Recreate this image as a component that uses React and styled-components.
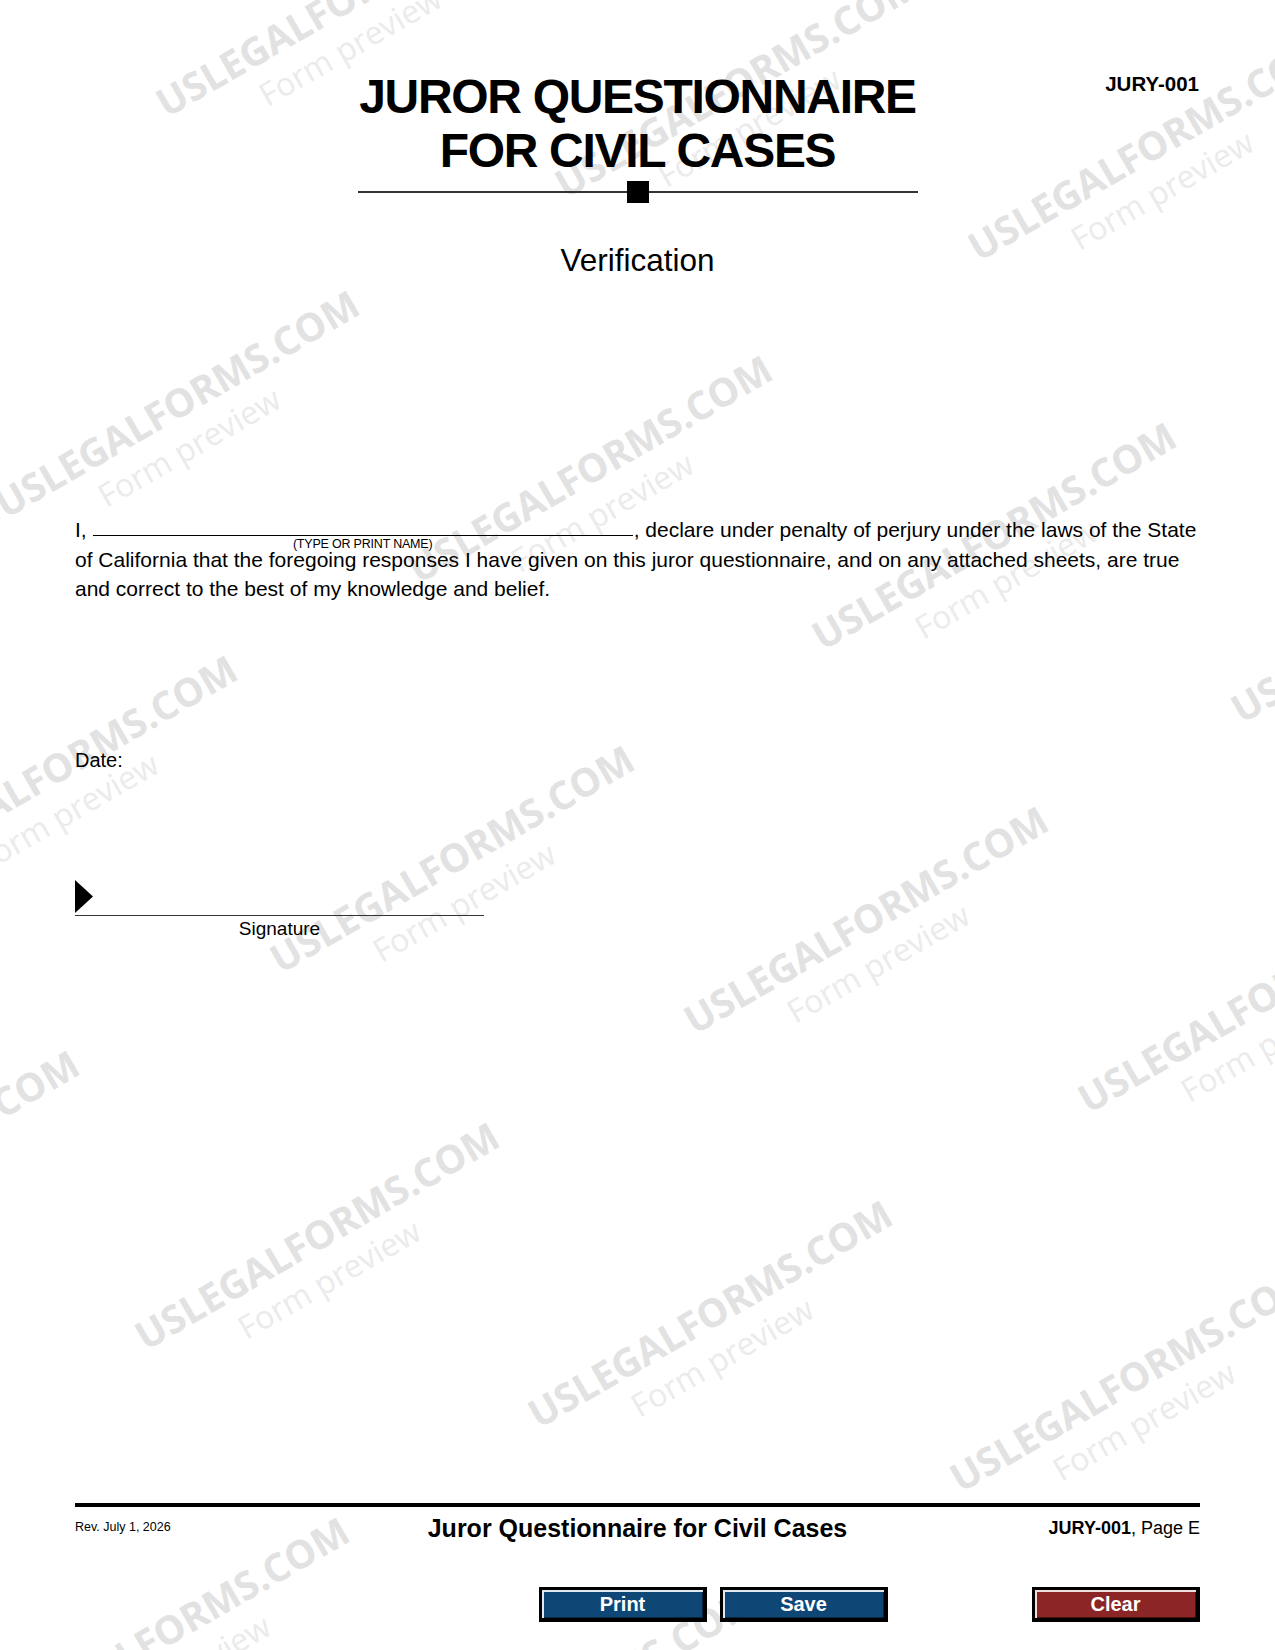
import React from 'react'
import styled, { createGlobalStyle } from 'styled-components'

const GlobalStyle = createGlobalStyle`
  html, body {
    margin: 0;
    padding: 0;
    background: #ffffff;
  }
  body {
    font-family: 'Liberation Sans', Arial, sans-serif;
    color: #000;
  }
`

// baseline start of each "USLEGALFORMS.COM" stamp
const marks = [
  [166, 118], [565, 199], [978, 262],
  [5, 519], [418, 584], [822, 651], [1241, 724],
  [-117, 884], [280, 974], [694, 1035], [1088, 1114],
  [-275, 1279], [145, 1351], [538, 1429], [960, 1493],
  [-5, 1746], [403, 1815],
]

export default function App() {
  return (
    <Page>
      <GlobalStyle />
      <Watermarks>
        {marks.map(([x, y], i) => (
          <Mark key={i} style={{ left: x - 17.3, top: y - 30 }}>
            <Brand>USLEGALFORMS.COM</Brand>
            <Sub>Form preview</Sub>
          </Mark>
        ))}
      </Watermarks>

      <Sheet>
        <Header>
          <span />
          <TitleBox>
            <Title>
              JUROR QUESTIONNAIRE
              <br />
              FOR CIVIL CASES
            </Title>
            <Rule>
              <RuleLine />
              <RuleSquare />
              <RuleLine />
            </Rule>
          </TitleBox>
          <FormCode>JURY-001</FormCode>
        </Header>

        <Heading>Verification</Heading>

        <Declaration>
          I,<NameField><FieldCaption>(TYPE OR PRINT NAME)</FieldCaption></NameField>, declare under
          penalty of perjury under the laws of the State
          <br />
          of California that the foregoing responses I have given on this juror questionnaire, and on any
          attached sheets, are true
          <br />
          and correct to the best of my knowledge and belief.
        </Declaration>

        <DateLabel>Date:</DateLabel>

        <SigBlock>
          <SigArrow viewBox="0 0 18 33" aria-hidden="true">
            <polygon points="0,0 18,16.5 0,33" fill="#000" />
          </SigArrow>
          <SigLine />
          <SigCaption>Signature</SigCaption>
        </SigBlock>

        <Footer>
          <FooterRule />
          <FooterRow>
            <RevDate>Rev. July 1, 2026</RevDate>
            <FooterTitle>Juror Questionnaire for Civil Cases</FooterTitle>
            <PageRef><b>JURY-001</b>, Page E</PageRef>
          </FooterRow>
          <Buttons>
            <FormButton>Print</FormButton>
            <FormButton>Save</FormButton>
            <FormButton $danger>Clear</FormButton>
          </Buttons>
        </Footer>
      </Sheet>
    </Page>
  )
}

const Page = styled.div`
  position: relative;
  width: 1275px;
  height: 1650px;
  overflow: hidden;
  background: #ffffff;
`

const Watermarks = styled.div`
  position: absolute;
  inset: 0;
  z-index: 0;
  pointer-events: none;
`

const Mark = styled.div`
  position: absolute;
  display: flex;
  flex-direction: column;
  transform: rotate(-30deg);
  transform-origin: 0 0;
  white-space: nowrap;
  font-family: 'Open Sans', 'DejaVu Sans', sans-serif;
`

const Brand = styled.div`
  font-size: 39px;
  font-weight: 700;
  line-height: 1;
  color: #e2e2e2;
`

const Sub = styled.div`
  margin-top: 9px;
  margin-left: 93px;
  font-size: 32px;
  font-weight: 400;
  line-height: 1;
  color: #ebebeb;
`

const Sheet = styled.main`
  position: relative;
  z-index: 1;
  height: 100%;
  box-sizing: border-box;
  padding: 70px 75px 28px;
  display: flex;
  flex-direction: column;
`

const Header = styled.header`
  display: grid;
  grid-template-columns: 1fr 560px 1fr;
  align-items: start;
`

const TitleBox = styled.div`
  display: flex;
  flex-direction: column;
`

const Title = styled.h1`
  margin: 0;
  font-size: 48px;
  font-weight: 700;
  line-height: 54px;
  letter-spacing: -1.3px;
  text-align: center;
  white-space: nowrap;
`

const Rule = styled.div`
  display: flex;
  align-items: center;
  height: 22px;
  margin-top: 3px;
`

const RuleLine = styled.div`
  flex: 1;
  height: 1.5px;
  background: #333;
`

const RuleSquare = styled.div`
  width: 22px;
  height: 22px;
  background: #000;
`

const FormCode = styled.div`
  justify-self: end;
  margin-top: 2px;
  margin-right: 1px;
  font-size: 20.5px;
  font-weight: 700;
  line-height: 24px;
`

const Heading = styled.h2`
  margin: 39px 0 0;
  font-size: 31.5px;
  font-weight: 400;
  line-height: 36px;
  text-align: center;
`

const Declaration = styled.p`
  margin: 237px 0 0;
  font-size: 21px;
  line-height: 29.5px;
  white-space: nowrap;
`

const NameField = styled.span`
  position: relative;
  display: inline-block;
  width: 540px;
  height: 16px;
  margin: 0 1px 1.5px 6px;
  border-bottom: 1.5px solid #000;
  vertical-align: baseline;
`

const FieldCaption = styled.span`
  position: absolute;
  left: 0;
  right: 0;
  top: calc(100% + 3.5px);
  font-size: 12.5px;
  line-height: 12px;
  letter-spacing: -0.2px;
  text-align: center;
  white-space: nowrap;
`

const DateLabel = styled.div`
  margin-top: 144px;
  font-size: 20px;
  line-height: 24px;
`

const SigBlock = styled.div`
  display: flex;
  flex-direction: column;
  width: 409px;
  margin-top: 108px;
`

const SigArrow = styled.svg`
  display: block;
  width: 18px;
  height: 33px;
`

const SigLine = styled.div`
  height: 1.5px;
  margin-top: 2.25px;
  background: #333;
`

const SigCaption = styled.div`
  margin-top: 2px;
  font-size: 19px;
  line-height: 22px;
  text-align: center;
`

const Footer = styled.footer`
  margin-top: auto;
  display: flex;
  flex-direction: column;
`

const FooterRule = styled.div`
  height: 4px;
  background: #000;
`

const FooterRow = styled.div`
  display: grid;
  grid-template-columns: 1fr auto 1fr;
  align-items: center;
  height: 30px;
  margin-top: 6px;
`

const RevDate = styled.div`
  font-size: 12.5px;
  line-height: 14px;
  margin-top: -3px;
`

const FooterTitle = styled.div`
  font-size: 25px;
  font-weight: 700;
  line-height: 30px;
`

const PageRef = styled.div`
  justify-self: end;
  font-size: 18px;
  line-height: 20px;
  b {
    font-weight: 700;
  }
`

const Buttons = styled.div`
  display: flex;
  justify-content: flex-end;
  gap: 13px;
  margin-top: 44px;
  & > :last-child {
    margin-left: 131px;
  }
`

const FormButton = styled.button`
  box-sizing: border-box;
  width: 168px;
  height: 35px;
  padding: 0;
  border: 3px solid #000;
  border-right-width: 4px;
  border-bottom-width: 4px;
  background: ${(p) => (p.$danger ? '#8c2525' : '#0e4676')};
  box-shadow: inset 2px 2px 0 ${(p) => (p.$danger ? '#f0dede' : '#e2e8ef')},
    inset -1px -1px 0 ${(p) => (p.$danger ? '#4a1010' : '#062540')};
  color: #ffffff;
  font-family: 'Liberation Sans', Arial, sans-serif;
  font-size: 20px;
  font-weight: 700;
  line-height: 27px;
  cursor: pointer;
`
